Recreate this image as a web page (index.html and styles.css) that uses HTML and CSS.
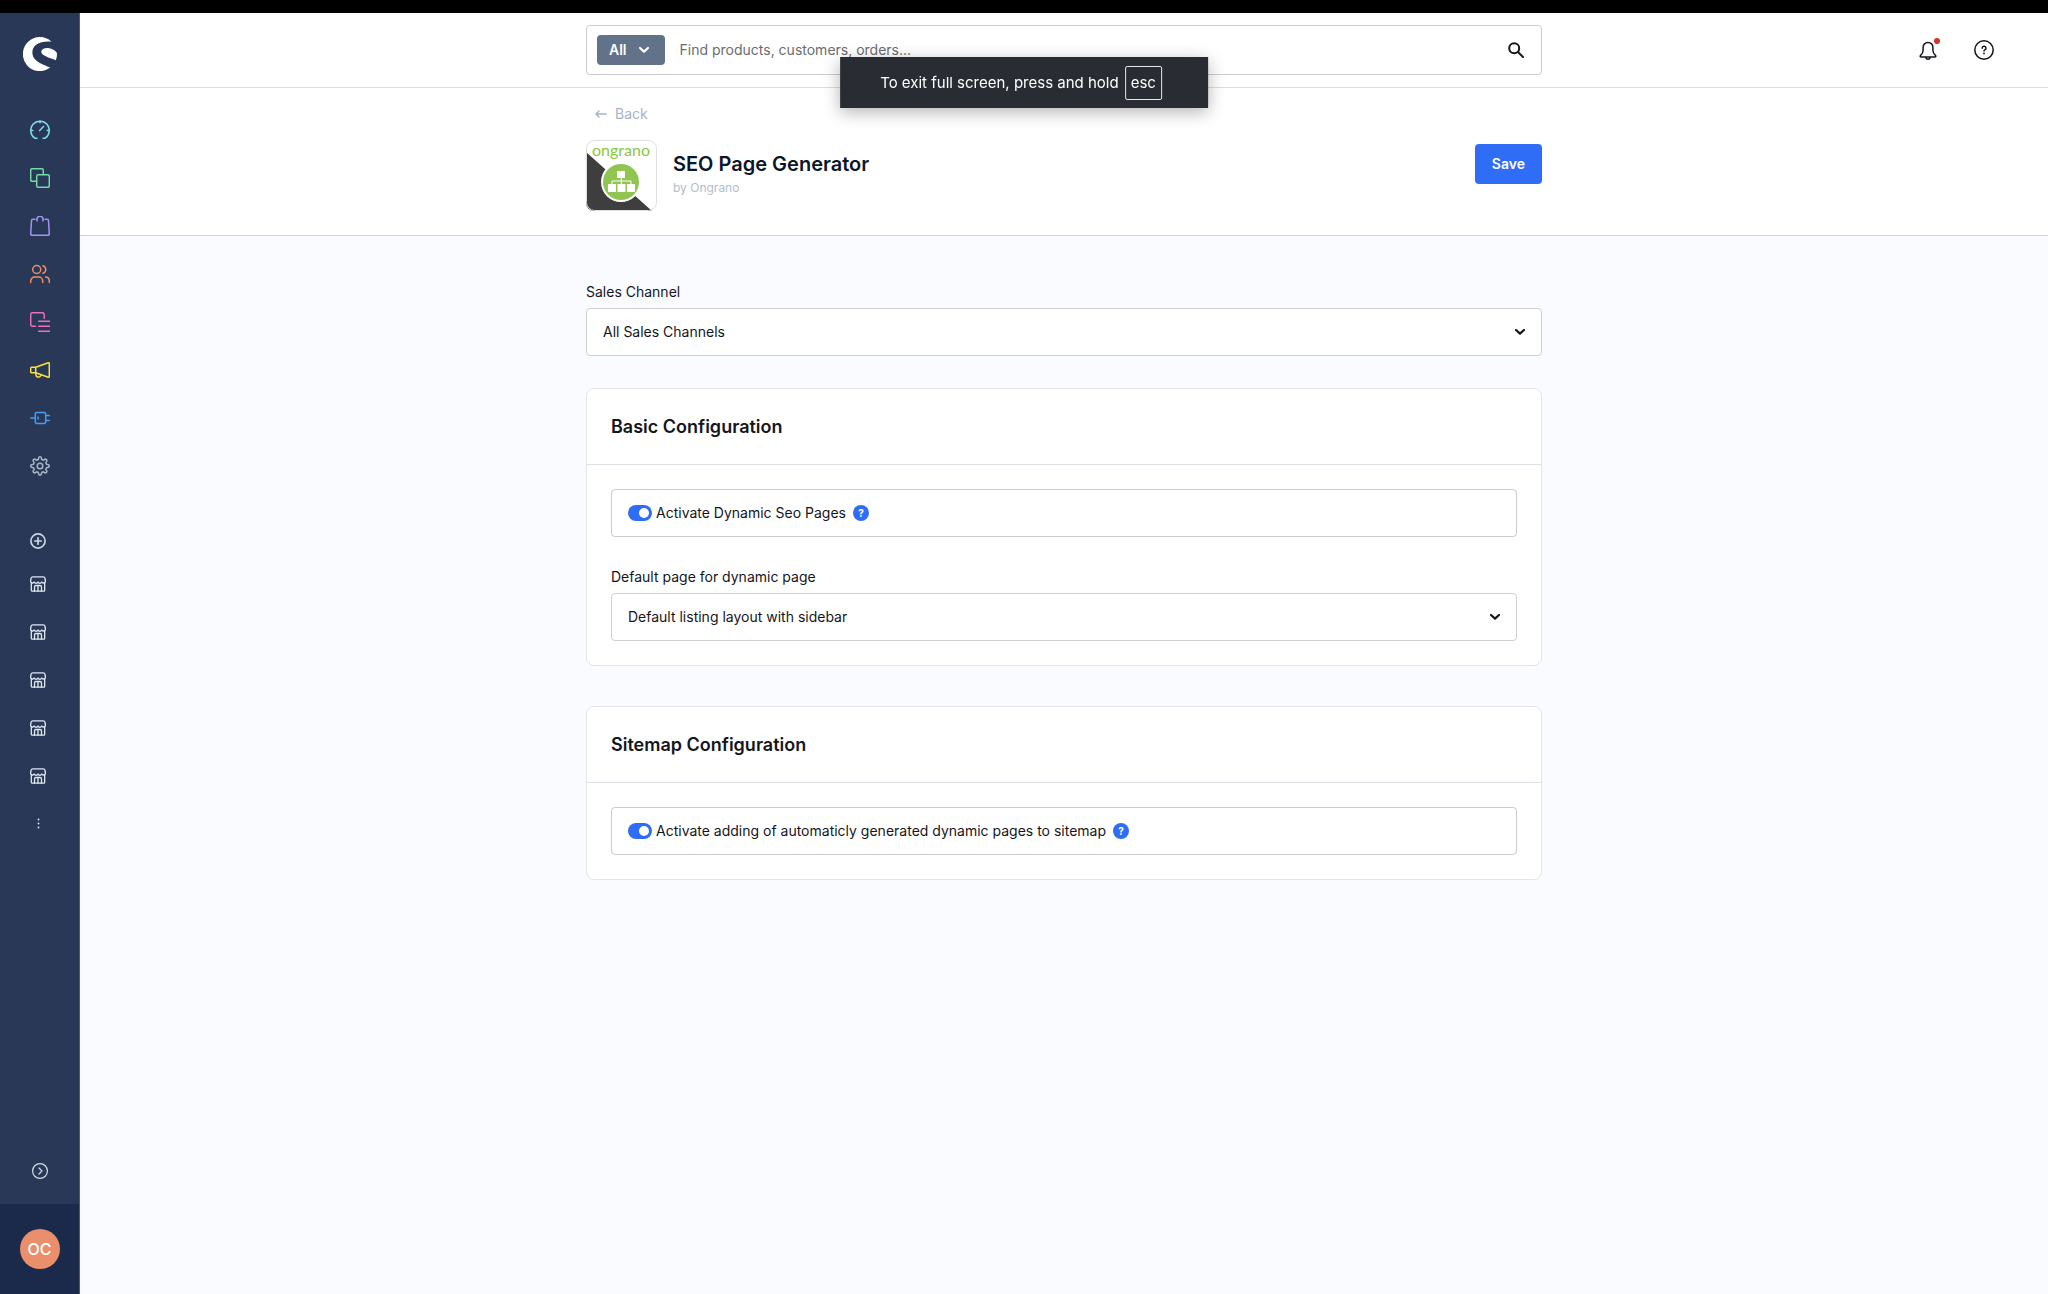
FILE: index.html
```
<!DOCTYPE html>
<html lang="en">
<head>
    <meta charset="UTF-8">
    <meta name="viewport" content="width=device-width, initial-scale=1.0">
    <title>SEO Page Generator</title>
    <link rel="stylesheet" href="styles.css">
</head>
<body>
    <!-- Shared icons -->
    <svg class="icon-defs" width="0" height="0" aria-hidden="true">
        <symbol id="icon-chevron" viewBox="0 0 12 8">
            <path d="M2 2l4 3.6L10 2" fill="none" stroke="currentColor" stroke-width="2.2" stroke-linecap="round" stroke-linejoin="round"/>
        </symbol>
        <symbol id="icon-store" viewBox="0 0 16 16">
            <g fill="none" stroke="currentColor" stroke-width="1.3" stroke-linecap="round" stroke-linejoin="round">
                <path d="M3 .8h10a2 2 0 0 1 2 1.500l.4 2.500A2 2 0 0 1 11.700 6a2 2 0 0 1-3.700 0 2 2 0 0 1-3.700 0A2 2 0 0 1 .6 4.800L1 2.300A2 2 0 0 1 3 .8z"/>
                <path d="M1.300 6.600v7.600a1 1 0 0 0 1 1h11.400a1 1 0 0 0 1-1V6.600"/>
                <path d="M4.500 15v-4a1.500 1.500 0 0 1 1.500-1.500h4a1.500 1.500 0 0 1 1.500 1.500v4M8 9.500V15"/>
            </g>
        </symbol>
    </svg>

    <div class="screen-edge"></div>

    <div class="app">
        <aside class="sidebar">
            <a class="logo" href="#" aria-label="Home">
                <svg viewBox="0 0 34 34" fill="currentColor">
                    <path d="M28.500 4.700A17 17 0 1 0 27.200 30.600C20 27 9.400 24.500 9.400 15.400 9.400 8.500 16 3.800 28.500 4.700z"/>
                    <path d="M18.200 14.600C18.600 12.200 21 11 24 11c4 0 8 2.200 9.700 4.600.6 2.400.1 5.300-1 7.700C29.500 21.400 18 19 18.200 14.600z"/>
                </svg>
            </a>

            <nav class="nav">
                <a class="nav-item dashboard" href="#" aria-label="Dashboard">
                    <svg viewBox="0 0 20 20"><path d="M7 18.200H4.800A9.300 9.300 0 1 1 15.200 18.200H13M10 .8v2M.8 10.500h2M17.200 10.500h2M9.700 10.600l3.800-4"/></svg>
                </a>
                <a class="nav-item catalogues" href="#" aria-label="Catalogues">
                    <svg viewBox="0 0 20 20"><rect x="6.700" y="6.700" width="12.600" height="12.600" rx="1.500"/><path d="M13.300 6.500V2.200A1.500 1.500 0 0 0 11.800.7H2.200A1.500 1.500 0 0 0 .7 2.200v9.600a1.500 1.500 0 0 0 1.500 1.500h4.300"/></svg>
                </a>
                <a class="nav-item orders" href="#" aria-label="Orders">
                    <svg viewBox="0 0 20 20"><path d="M4.800 3.300H3A1.500 1.500 0 0 0 1.500 4.800L.7 17.800a1.500 1.500 0 0 0 1.500 1.500h15.600a1.500 1.500 0 0 0 1.500-1.500l-.8-13A1.500 1.500 0 0 0 17 3.300h-1.800M7 5V3.300a3 3 0 0 1 6 0V5M7 3.300h-.5M13 3.300h.5"/></svg>
                </a>
                <a class="nav-item customers" href="#" aria-label="Customers">
                    <svg viewBox="0 0 20 20"><circle cx="6.700" cy="5.500" r="4"/><path d="M.7 18.500v-1.500a4 4 0 0 1 4-4h4a4 4 0 0 1 4 4v1.500M13 1.700a4 4 0 0 1 0 7.600M15.500 13a4 4 0 0 1 3.800 4v1.500"/></svg>
                </a>
                <a class="nav-item content" href="#" aria-label="Content">
                    <svg viewBox="0 0 20 20"><path d="M5.500 14.200H2.700a2 2 0 0 1-2-2V2.700a2 2 0 0 1 2-2h9.500a2 2 0 0 1 2 2v3.500M8.700 9.300h11M8.700 14.200h11M8.700 19.200h11"/></svg>
                </a>
                <a class="nav-item marketing" href="#" aria-label="Marketing">
                    <svg viewBox="0 0 20 20"><path d="M1.700 7.200h4v5.600h-4a1 1 0 0 1-1-1V8.200a1 1 0 0 1 1-1zM5.700 7.200L18.300 2.800a.8.8 0 0 1 1 .8v12.800a.8.8 0 0 1-1 .8L5.700 12.800M5.800 13v1.500a2.600 2.600 0 0 0 4.800 1.300"/></svg>
                </a>
                <a class="nav-item extensions" href="#" aria-label="Extensions">
                    <svg viewBox="0 0 20 20"><path d="M.7 10h4.500M6.800 4.500h7.400a1.500 1.500 0 0 1 1.500 1.500v8a1.500 1.500 0 0 1-1.500 1.500H6.800A1.500 1.500 0 0 1 5.300 14V6a1.500 1.500 0 0 1 1.500-1.500zM15.700 7.500h3.600M15.700 12.500h3.600M8 9v2"/></svg>
                </a>
                <a class="nav-item settings" href="#" aria-label="Settings">
                    <svg viewBox="0 0 20 20"><circle cx="10" cy="10" r="2.800"/><path d="M8.800 1.300Q10 .3 11.200 1.300L11.700 3.500 13.400 4.200 15.300 3Q16.800 3.200 17 4.700L15.800 6.600 16.500 8.300 18.700 8.800Q19.700 10 18.700 11.200L16.500 11.700 15.800 13.400 17 15.300Q16.800 16.800 15.300 17L13.400 15.800 11.700 16.500 11.200 18.700Q10 19.700 8.800 18.700L8.300 16.500 6.600 15.800 4.700 17Q3.200 16.800 3 15.300L4.200 13.400 3.500 11.700 1.300 11.200Q.3 10 1.300 8.800L3.500 8.300 4.200 6.600 3 4.700Q3.200 3.200 4.700 3L6.600 4.200 8.300 3.500z"/></svg>
                </a>
            </nav>

            <nav class="channels">
                <a class="channel add" href="#" aria-label="Add sales channel">
                    <svg viewBox="0 0 16 16" fill="none" stroke="currentColor" stroke-width="1.700" stroke-linecap="round"><circle cx="8" cy="8" r="7.100"/><path d="M8 4.800v6.400M4.800 8h6.400"/></svg>
                </a>
                <a class="channel" href="#" aria-label="Storefront 1"><svg><use href="#icon-store"/></svg></a>
                <a class="channel" href="#" aria-label="Storefront 2"><svg><use href="#icon-store"/></svg></a>
                <a class="channel" href="#" aria-label="Storefront 3"><svg><use href="#icon-store"/></svg></a>
                <a class="channel" href="#" aria-label="Storefront 4"><svg><use href="#icon-store"/></svg></a>
                <a class="channel" href="#" aria-label="Storefront 5"><svg><use href="#icon-store"/></svg></a>
                <a class="channel" href="#" aria-label="More">
                    <svg viewBox="0 0 16 16" fill="currentColor"><circle cx="8.500" cy="3.500" r=".9"/><circle cx="8.500" cy="7.500" r=".9"/><circle cx="8.500" cy="11.500" r=".9"/></svg>
                </a>
            </nav>

            <button class="expand" type="button" aria-label="Expand menu">
                <svg viewBox="0 0 16 16" fill="none" stroke="currentColor" stroke-width="1.200" stroke-linecap="round" stroke-linejoin="round"><circle cx="8" cy="8" r="7.400"/><path d="M7 5l3 3-3 3"/></svg>
            </button>

            <div class="user">
                <button class="avatar" type="button">OC</button>
            </div>
        </aside>

        <main class="main">
            <header class="topbar">
                <form class="search">
                    <button class="search-type" type="button">All
                        <svg class="chevron"><use href="#icon-chevron"/></svg>
                    </button>
                    <input class="search-input" type="text" placeholder="Find products, customers, orders..." aria-label="Search">
                    <button class="search-button" type="submit" aria-label="Search">
                        <svg viewBox="0 0 16 16" fill="none" stroke="currentColor" stroke-width="2" stroke-linecap="round"><circle cx="6.200" cy="6.200" r="5"/><path d="M10 10l5 5"/></svg>
                    </button>
                </form>
                <div class="actions">
                    <button class="action" type="button" aria-label="Notifications">
                        <svg viewBox="0 0 20 20" fill="none" stroke="currentColor" stroke-width="1.500" stroke-linejoin="round"><path d="M10 2.500a4.800 4.800 0 0 1 4.900 4.900v2.800c0 2 .7 3.600 2.500 5.200.8.700.5 1.600-.5 1.600H3.100c-1 0-1.300-.900-.5-1.600 1.800-1.600 2.500-3.200 2.500-5.200V7.400A4.800 4.800 0 0 1 10 2.500zM8 17.200a2 2 0 0 0 4 0"/></svg>
                        <span class="dot"></span>
                    </button>
                    <button class="action" type="button" aria-label="Help">
                        <svg viewBox="0 0 20 20" fill="none" stroke="currentColor" stroke-width="1.500" stroke-linecap="round"><circle cx="10" cy="10" r="9.200"/><path d="M8.200 8.200a1.900 1.900 0 1 1 2.600 1.700c-.6.300-.8.600-.8 1.200"/><path d="M10 13.500v.1" stroke-width="1.800"/></svg>
                    </button>
                </div>
            </header>

            <section class="page-head">
                <div class="container">
                    <a class="back" href="#">
                        <svg viewBox="0 0 12 10" fill="none" stroke="currentColor" stroke-width="1.500" stroke-linecap="round" stroke-linejoin="round"><path d="M11.200 5H1M4 2L1 5l3 3"/></svg>
                        Back
                    </a>
                    <div class="extension">
                        <svg class="extension-icon" viewBox="0 0 71 71" role="img" aria-label="Ongrano">
                            <defs><clipPath id="round"><rect width="71" height="71" rx="8"/></clipPath></defs>
                            <g clip-path="url(#round)">
                                <rect width="71" height="71" fill="#fff"/>
                                <path d="M0 12L66 71H0z" fill="#3e3e3f"/>
                                <circle cx="35" cy="42" r="20" fill="#fff"/>
                                <circle cx="35" cy="42" r="18" fill="#8fc550"/>
                                <g fill="#fff">
                                    <rect x="31" y="31" width="8" height="7"/>
                                    <rect x="22" y="44" width="8" height="8"/>
                                    <rect x="31.500" y="44" width="8" height="8"/>
                                    <rect x="41" y="44" width="8" height="8"/>
                                </g>
                                <path d="M35.300 38v6M26 44v-3h19v3" fill="none" stroke="#fff"/>
                                <text class="brand" x="35" y="16" text-anchor="middle">ongrano</text>
                            </g>
                            <rect x=".5" y=".5" width="70" height="70" rx="8" fill="none" stroke="#dedfe1"/>
                        </svg>
                        <div class="extension-text">
                            <h1>SEO Page Generator</h1>
                            <p>by Ongrano</p>
                        </div>
                        <button class="save" type="button">Save</button>
                    </div>
                </div>
            </section>

            <div class="container content-area">
                <div class="field">
                    <label for="sales_channel">Sales Channel</label>
                    <div class="select">
                        <select id="sales_channel">
                            <option>All Sales Channels</option>
                        </select>
                        <svg class="chevron"><use href="#icon-chevron"/></svg>
                    </div>
                </div>

                <section class="card">
                    <h2>Basic Configuration</h2>
                    <div class="card-body">
                        <div class="switch">
                            <input type="checkbox" id="seo_pages" checked>
                            <label for="seo_pages">Activate Dynamic Seo Pages</label>
                            <button class="help" type="button">?</button>
                        </div>
                        <div class="field">
                            <label for="default_page">Default page for dynamic page</label>
                            <div class="select">
                                <select id="default_page">
                                    <option>Default listing layout with sidebar</option>
                                </select>
                                <svg class="chevron"><use href="#icon-chevron"/></svg>
                            </div>
                        </div>
                    </div>
                </section>

                <section class="card">
                    <h2>Sitemap Configuration</h2>
                    <div class="card-body">
                        <div class="switch">
                            <input type="checkbox" id="sitemap" checked>
                            <label for="sitemap">Activate adding of automaticly generated dynamic pages to sitemap</label>
                            <button class="help" type="button">?</button>
                        </div>
                    </div>
                </section>
            </div>
        </main>
    </div>

    <div class="fullscreen-hint">To exit full screen, press and hold <kbd>esc</kbd></div>
</body>
</html>
```
FILE: styles.css
```
* {
    box-sizing: border-box;
}

body {
    margin: 0;
    min-height: 100vh;
    display: flex;
    flex-direction: column;
    font-family: Inter, "Liberation Sans", sans-serif;
    font-size: 14px;
    line-height: 20px;
    color: #15161c;
    background-color: #fafbff;
}

button, input, select {
    font: inherit;
    color: inherit;
}

button {
    padding: 0;
    border: none;
    background: none;
    cursor: pointer;
}

h1, h2, p {
    margin: 0;
}

.icon-defs {
    position: absolute;
}

.screen-edge {
    height: 13px;
    background-color: #000;
}

.app {
    flex: 1;
    display: flex;
}

/* Sidebar */
.sidebar {
    width: 80px;
    display: flex;
    flex-direction: column;
    background-color: #293856;
    border-right: 1px solid #4c5a76;
}

.logo {
    height: 93px;
    padding: 24px 23px;
    color: #fff;
}

.logo svg {
    display: block;
    width: 34px;
    height: 34px;
}

.nav-item, .channel {
    display: flex;
    align-items: center;
    height: 48px;
    padding-left: 30px;
}

.nav-item svg {
    width: 20px;
    height: 20px;
    fill: none;
    stroke: currentColor;
    stroke-width: 1.5;
    stroke-linecap: round;
    stroke-linejoin: round;
}

.dashboard { color: #7fdcee; }
.catalogues { color: #76d9a3; }
.orders { color: #a794f2; }
.customers { color: #ee8f68; }
.content { color: #ee6fb8; }
.marketing { color: #f7e23f; }
.extensions { color: #469df3; }
.settings { color: #a9b5c4; }

.channels {
    margin-top: 32px;
}

.channel {
    color: #e2e8f1;
}

.channel svg {
    width: 16px;
    height: 16px;
}

.channel.add {
    height: 38px;
    color: #cbd6e6;
}

.expand {
    margin-top: auto;
    height: 66px;
    color: #d5ddea;
}

.expand svg {
    display: block;
    width: 16px;
    height: 16px;
    margin: 0 auto;
}

.user {
    display: flex;
    align-items: center;
    justify-content: center;
    height: 90px;
    background-color: #1b294b;
}

.avatar {
    width: 40px;
    height: 40px;
    border-radius: 50%;
    background-color: #e98f6c;
    color: #fff;
    font-size: 16px;
    font-weight: 500;
}

/* Top bar */
.main {
    flex: 1;
    min-width: 0;
}

.topbar {
    display: grid;
    grid-template-columns: 1fr minmax(0, 956px) 1fr;
    align-items: center;
    height: 75px;
    background-color: #fff;
    border-bottom: 1px solid #d8dfe5;
}

.search {
    grid-column: 2;
    display: flex;
    align-items: center;
    height: 50px;
    padding: 0 17px 0 10px;
    border: 1px solid #cacbd1;
    border-radius: 4px;
}

.search-type {
    display: flex;
    align-items: center;
    gap: 11px;
    height: 30px;
    padding: 0 15px 0 12px;
    border-radius: 4px;
    background-color: #627389;
    color: #fff;
    font-weight: 600;
}

.chevron {
    width: 12px;
    height: 8px;
}

.search-input {
    flex: 1;
    min-width: 0;
    padding: 0 15px;
    border: none;
    outline: none;
    background: none;
}

.search-input::placeholder {
    color: #6b6c70;
    opacity: 1;
}

.search-button svg {
    display: block;
    width: 16px;
    height: 16px;
}

.actions {
    display: flex;
    gap: 36px;
    justify-self: end;
    padding-right: 54px;
}

.action {
    position: relative;
}

.action svg {
    display: block;
    width: 20px;
    height: 20px;
}

.dot {
    position: absolute;
    top: -2px;
    right: -2px;
    width: 6px;
    height: 6px;
    border-radius: 50%;
    background-color: #d5302b;
}

/* Page head */
.container {
    max-width: 956px;
    margin: 0 auto;
}

.page-head {
    padding: 16px 0 24px;
    background-color: #fff;
    border-bottom: 1px solid #d2d6dd;
}

.back {
    display: flex;
    align-items: center;
    gap: 8px;
    margin: 0 0 16px 9px;
    color: #a8b4c6;
    text-decoration: none;
}

.back svg {
    width: 12px;
    height: 10px;
}

.extension {
    display: flex;
    align-items: flex-start;
}

.extension-icon {
    width: 71px;
    height: 71px;
}

.brand {
    font-family: Lato, sans-serif;
    font-size: 16px;
    fill: #8cc63e;
}

.extension-text {
    flex: 1;
    padding: 10px 16px 0;
}

.extension-text h1 {
    font-size: 20px;
    line-height: 28px;
    font-weight: 600;
    color: #0b162c;
}

.extension-text p {
    font-size: 12px;
    color: #b3bdcb;
}

.save {
    height: 40px;
    margin-top: 4px;
    padding: 0 17px;
    border-radius: 4px;
    background-color: #2f6df6;
    color: #fff;
    font-weight: 600;
}

/* Form */
.content-area {
    padding: 46px 0 40px;
}

.field > label {
    display: block;
    margin-bottom: 6px;
}

.select {
    position: relative;
}

.select select {
    display: block;
    width: 100%;
    height: 48px;
    padding: 0 40px 0 16px;
    border: 1px solid #cfd0d6;
    border-radius: 4px;
    background-color: #fff;
    appearance: none;
}

.select .chevron {
    position: absolute;
    top: 20px;
    right: 16px;
    pointer-events: none;
}

.card {
    margin-top: 32px;
    border: 1px solid #e3e4ea;
    border-radius: 8px;
    background-color: #fff;
}

.card + .card {
    margin-top: 40px;
}

.card h2 {
    padding: 26px 24px 25px;
    border-bottom: 1px solid #e0e1e8;
    font-size: 18px;
    line-height: 24px;
    font-weight: 600;
}

.card-body {
    padding: 24px;
}

.switch {
    display: flex;
    align-items: center;
    height: 48px;
    padding: 0 16px;
    border: 1px solid #cacbd1;
    border-radius: 4px;
}

.switch + .field {
    margin-top: 30px;
}

.switch input {
    display: flex;
    align-items: center;
    width: 24px;
    height: 16px;
    margin: 0 4px 0 0;
    border-radius: 8px;
    background-color: #2f6df6;
    appearance: none;
}

.switch input::before {
    content: "";
    width: 10px;
    height: 10px;
    margin-left: 11px;
    border-radius: 50%;
    background-color: #fff;
}

.help {
    width: 16px;
    height: 16px;
    margin-left: 7px;
    border-radius: 50%;
    background-color: #2f6df6;
    color: #fff;
    font-size: 10px;
    line-height: 16px;
    font-weight: 700;
}

/* Full screen message */
.fullscreen-hint {
    position: fixed;
    top: 57px;
    left: 50%;
    transform: translateX(-50%);
    display: flex;
    align-items: center;
    gap: 6px;
    height: 51px;
    padding: 0 46px 0 40px;
    background-color: #2a2c34;
    box-shadow: 0 4px 16px rgba(0, 0, 0, 0.3);
    color: #fff;
    font-size: 15px;
    white-space: nowrap;
}

.fullscreen-hint kbd {
    padding: 6px 5px;
    border: 1px solid #e8e9ea;
    border-radius: 2px;
    font: inherit;
}
```
